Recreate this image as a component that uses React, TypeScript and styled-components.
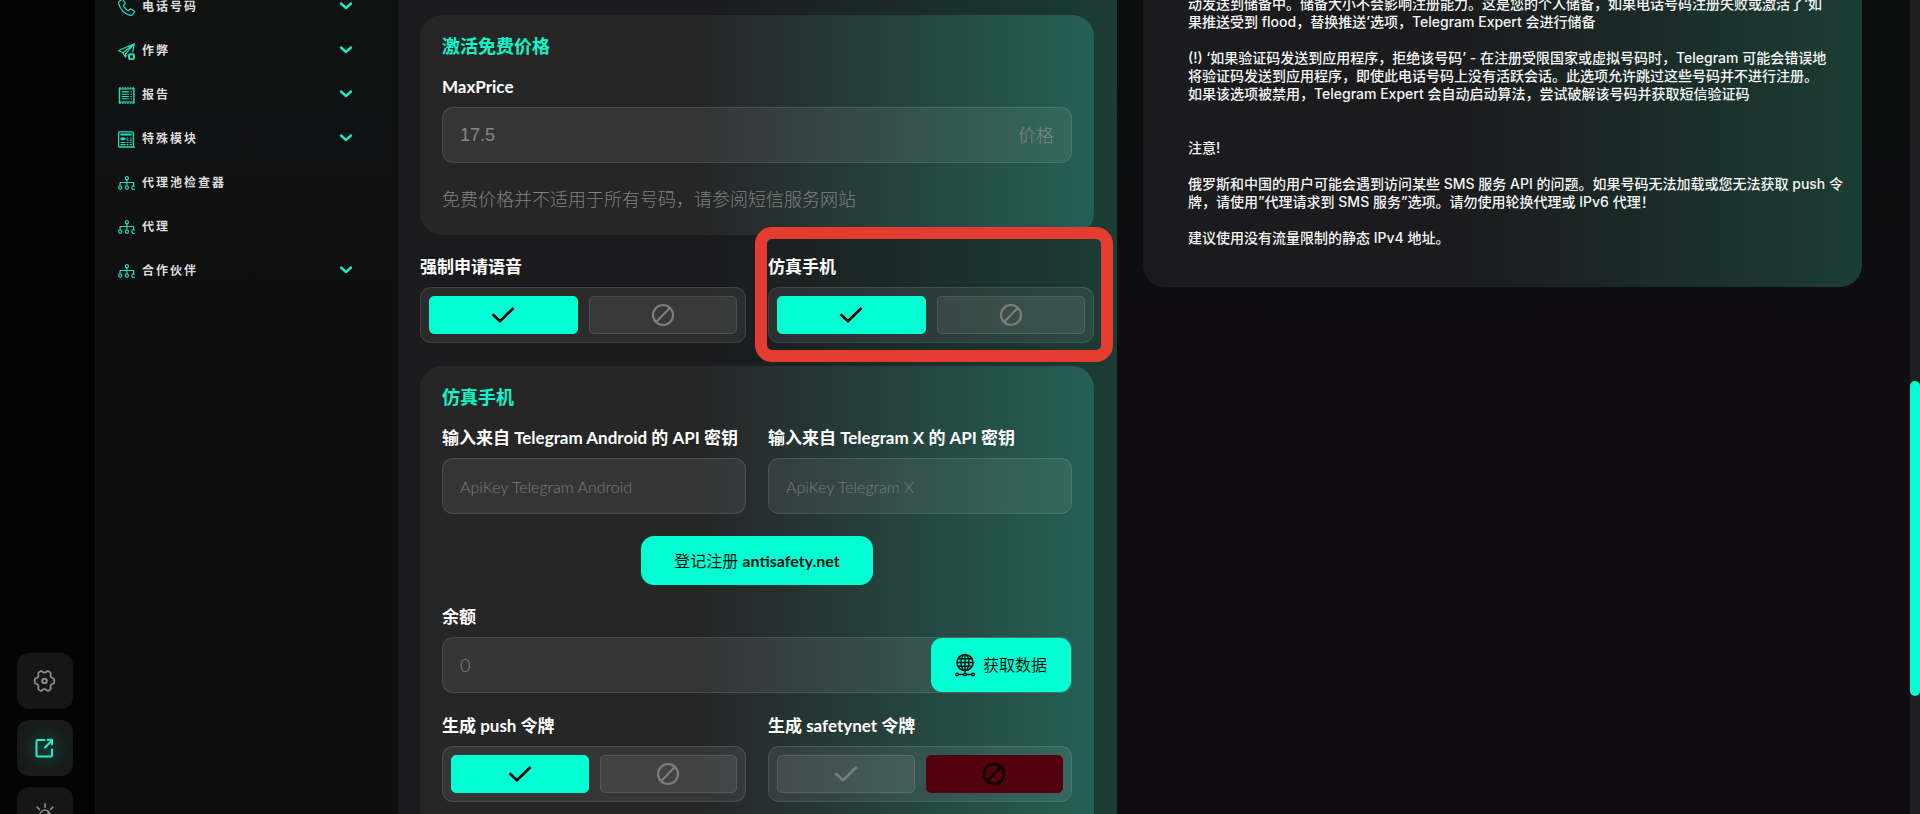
import React from 'react';
import styled, { createGlobalStyle, css } from 'styled-components';

const accent = '#00ffd2';
const sans = `"Lato", "Noto Sans CJK SC", sans-serif`;

const GlobalStyle = createGlobalStyle`
  *, *::before, *::after { box-sizing: border-box; }
  body {
    margin: 0;
    background: #0f0d10;
    color: #fff;
    font-family: ${sans};
    -webkit-font-smoothing: antialiased;
  }
  button, input { font: inherit; color: inherit; }
`;

/* ---------- shell ---------- */

const Shell = styled.div`
  display: flex;
  height: 100vh;
  overflow: hidden;
  background: linear-gradient(180deg, #0b0e0c 0, #0d0e0f 160px, #0f0d10 320px);
`;

const Rail = styled.nav`
  display: flex;
  flex: none;
  flex-direction: column;
  align-items: center;
  justify-content: flex-end;
  gap: 11px;
  width: 95px;
  padding-right: 5px;
  background: #040404;
`;

const RailButton = styled.button<{ $active?: boolean }>`
  display: grid;
  flex: none;
  place-items: center;
  width: 56px;
  height: 56px;
  padding: 0;
  border: 0;
  border-radius: 12px;
  color: ${(p) => (p.$active ? '#1ff0cb' : '#8b8b8b')};
  background: ${(p) =>
    p.$active ? 'radial-gradient(circle, #12382f 0, #171d1b 55%, #181818 100%)' : '#161616'};

  &:last-child { margin-bottom: -29px; }
`;

const Sidebar = styled.aside`
  flex: none;
  width: 303px;
  padding: 0 46px 0 23px;
  border-right: 1px solid #0a0a0a;
  background: linear-gradient(180deg, #101211 0, #101112 120px, #0e0e0f 320px);
`;

const Menu = styled.ul`
  margin: -15px 0 0;
  padding: 0;
  list-style: none;
`;

const MenuLink = styled.a`
  display: flex;
  align-items: center;
  gap: 7px;
  height: 44px;
  color: #dcdcdc;
  font-size: 12px;
  font-weight: 700;
  letter-spacing: 2px;
  line-height: 16px;
  text-decoration: none;

  svg { flex: none; color: #1fe0bd; }
  svg:nth-of-type(2) { margin: -3px -2px 0 auto; color: #1fe8c5; }
`;

const Main = styled.main`
  display: grid;
  flex: 1;
  grid-template-columns: minmax(0, 1fr) minmax(0, 1fr);
  gap: 26px;
  min-width: 0;
  padding-right: 48px;
  overflow: hidden;
`;

const ScrollTrack = styled.div`
  display: flex;
  flex: none;
  flex-direction: column;
  width: 10px;
  background: #201f21;

  &::before { flex: 381; content: ''; }
  &::after { flex: 118; content: ''; }
`;

const ScrollThumb = styled.div`
  flex: 315;
  border-radius: 5px;
  background: ${accent};
`;

/* ---------- form ---------- */

const panelFill = 'linear-gradient(90deg, #1b1b1d 0, #1b1b1d 44%, #1b3d34 100%)';

const FormPanel = styled.form`
  display: flex;
  flex-direction: column;
  min-width: 0;
  height: max-content;
  padding: 15px 23px 40px 22px;
  background: ${panelFill};
`;

const Card = styled.section<{ $tall?: boolean }>`
  padding: 22px 22px ${(p) => (p.$tall ? 60 : 23)}px;
  border-radius: 22px;
  background: linear-gradient(90deg, #262627 0, #262627 42%, #246055 100%);
`;

const CardTitle = styled.h2`
  margin: 0 0 20px;
  color: #0ff5cb;
  font-size: 18px;
  font-weight: 700;
  line-height: 18px;
`;

const Columns = styled.div`
  display: grid;
  grid-template-columns: minmax(0, 1fr) minmax(0, 1fr);
  gap: 22px;
`;

const OuterColumns = styled(Columns)`
  margin: 20px 0 23px;
`;

const Field = styled.div`
  position: relative;
  min-width: 0;
`;

const labelText = css`
  display: block;
  margin: 0;
  padding: 0 0 8px;
  font-size: 17px;
  font-weight: 700;
  line-height: 24px;
  white-space: nowrap;
`;

const Label = styled.label`
  ${labelText}
`;

const Group = styled.fieldset`
  min-width: 0;
  margin: 0;
  padding: 0;
  border: 0;
`;

const Legend = styled.legend`
  ${labelText}
`;

const InputShell = styled.div`
  display: flex;
  align-items: center;
  height: 56px;
  border: 1px solid rgba(255, 255, 255, 0.1);
  border-radius: 11px;
  background: rgba(255, 255, 255, 0.07);
`;

const Input = styled.input<{ $size: number; $plain?: boolean }>`
  flex: 1;
  min-width: 0;
  height: 100%;
  padding: 0 17px;
  border: 0;
  outline: 0;
  background: transparent;
  color: #858687;
  font-family: ${(p) => (p.$plain ? '"Liberation Sans", sans-serif' : sans)};
  font-size: ${(p) => p.$size}px;
  font-weight: 300;

  &::placeholder { color: #7b7d7d; opacity: 1; }
`;

const Suffix = styled.span`
  padding-right: 17px;
  color: #7f8a87;
  font-size: 18px;
  font-weight: 300;
  line-height: 24px;
`;

const Hint = styled.p`
  margin: 23px 0 0;
  color: #808181;
  font-size: 18px;
  font-weight: 300;
  line-height: 26px;
`;

const Highlight = styled.span`
  position: absolute;
  inset: -28px -19px -19px -13px;
  border: 12px solid #e53c32;
  border-radius: 17px;
  pointer-events: none;
`;

const Switch = styled.div`
  display: grid;
  grid-template-columns: minmax(0, 1fr) minmax(0, 1fr);
  gap: 11px;
  height: 56px;
  padding: 8px;
  border: 1px solid rgba(255, 255, 255, 0.1);
  border-radius: 11px;
  background: rgba(255, 255, 255, 0.07);
`;

const optionFill = {
  on: css`
    border-color: ${accent};
    background: ${accent};
    color: #000;
  `,
  off: css`
    border-color: #520410;
    background: #52000d;
    color: #000;
  `,
  idle: css`
    border-color: rgba(255, 255, 255, 0.1);
    background: rgba(255, 255, 255, 0.07);
    color: #7c7d7d;
  `,
};

const Option = styled.label<{ $look: keyof typeof optionFill }>`
  position: relative;
  display: grid;
  place-items: center;
  border: 1px solid;
  border-radius: 5px;
  ${(p) => optionFill[p.$look]}

  input {
    position: absolute;
    inset: 0;
    margin: 0;
    appearance: none;
  }
`;

const RegisterButton = styled.button`
  display: block;
  height: 49px;
  margin: 22px auto 20px;
  padding: 0 33px;
  border: 0;
  border-radius: 13px;
  background: ${accent};
  color: #04120f;
  font-size: 16px;
  font-weight: 400;
  line-height: 24px;

  b { font-weight: 700; }
`;

const FetchButton = styled.button`
  display: flex;
  align-items: center;
  justify-content: center;
  gap: 8px;
  width: 140px;
  height: 100%;
  padding: 0;
  border: 0;
  border-radius: 11px;
  background: ${accent};
  color: #04120f;
  font-size: 16px;
  font-weight: 400;
  line-height: 24px;
`;

const BottomColumns = styled(Columns)`
  margin-top: 21px;
`;

/* ---------- notes ---------- */

const Notes = styled.article`
  height: max-content;
  min-width: 0;
  margin-top: -5px;
  padding: 0 16px 40px 45px;
  border-radius: 0 0 22px 22px;
  background: ${panelFill};
  color: #f4f6f5;
  font-family: "Inter", "Noto Sans CJK SC", sans-serif;
  font-size: 14px;
  font-weight: 500;
  line-height: 18px;

  p { margin: 0 0 18px; }
  p.gap { margin-bottom: 36px; }
  p:last-child { margin-bottom: 0; }
`;

/* ---------- icons ---------- */

const stroke = { fill: 'none', stroke: 'currentColor', strokeLinecap: 'round', strokeLinejoin: 'round' } as const;

const Icon = ({ size = 17, children }: { size?: number; children: React.ReactNode }) => (
  <svg width={size} height={size} viewBox={`0 0 ${size} ${size}`} aria-hidden="true" {...stroke}>
    {children}
  </svg>
);

const PhoneIcon = () => (
  <Icon>
    <path strokeWidth="1.2" d="M3.6.8 1.5 2.2C.6 2.9.5 4 .9 5.3c1.5 4.800 5.800 9.300 10.600 10.900 1.400.4 2.500.3 3.200-.6l1.500-2c.4-.6.3-1.200-.2-1.600l-2.700-1.900c-.6-.4-1.200-.3-1.600.2l-.8 1.100c-.3.4-.7.4-1.100.1-1.700-1.200-3.200-2.700-4.300-4.400-.2-.4-.2-.8.2-1.100l1-.8c.5-.4.6-1 .2-1.600L5.200 1C4.800.5 4.200.4 3.600.8Z" />
  </Icon>
);

const PlaneIcon = () => (
  <Icon>
    <path strokeWidth="1.200" d="M16.300.7.6 7.500l4.200 2.200L16.300.7ZM4.800 9.700l2.600 4.400M16.300.7 7.400 11.200M16.300.7l-1.500 8.300" />
    <path d="m7.200 11 .3 3 1.700-2" />
    <rect x="11" y="11.200" width="5" height="5" rx="1.600" strokeWidth="2" />
  </Icon>
);

const ReportIcon = () => (
  <Icon>
    <path d="M1.500 1.200v14.600M15.900 1.200v14.600" strokeWidth="1.400" />
    <path d="M1.800 1.100h14M1.800 15.900h14" strokeDasharray=".6 2" strokeWidth="1.500" />
    <path d="M1.500 2h14.400M1.500 15h14.400M4 4.900h6.500M4 7.200h6.500M4 9.500h6.500M4 11.800h6.500M12.800 4.900h.6M12.800 7.200h.6M12.800 9.500h.6M12.800 11.800h.6" strokeWidth="1.100" />
  </Icon>
);

const ModuleIcon = () => (
  <Icon>
    <path d="M1.500.8h12.900q1 0 1 1v12.700q0 1.200 1 1.500H1.500q-.9 0-.9-1V1.800q0-1 .9-1Z" strokeWidth="1.300" />
    <path d="M3.200 3.600h9.800" strokeWidth="2" />
    <path d="M3.700 7.800h2.600" strokeWidth="2.800" />
    <path d="M9 7h1M12.300 7h1M9 9.200h1M12.300 9.200h1M3 11.500h4M9 11.500h1M12.300 11.500h1M3 13.600h4M9 13.600h1M12.300 13.600h1" strokeWidth="1.200" />
  </Icon>
);

const NetworkIcon = () => (
  <Icon>
    <g strokeWidth="1.200">
      <ellipse cx="8.900" cy="3.200" rx="1.500" ry="1.700" />
      <path d="M8.900 5v4.800M2.100 9.700V7.500h13.500v2.200" />
      <ellipse cx="2.200" cy="12.600" rx="1.500" ry="1.800" />
      <ellipse cx="8.900" cy="12.600" rx="1.500" ry="1.800" />
      <path d="M16.400 11q-2.500-1-2.500 1.600t2.500 1.600" />
    </g>
  </Icon>
);

const Chevron = () => (
  <svg width="14" height="10" viewBox="0 0 14 10" aria-hidden="true" {...stroke}>
    <path d="m2 2.500 5 4.500 5-4.500" strokeWidth="2.400" />
  </svg>
);

const GearIcon = () => (
  <svg width="24" height="24" viewBox="1 0 24 24" aria-hidden="true" {...stroke}>
    <path
      strokeWidth="1.800"
      d="M8.300 2.400q1.200-.9 2 .3.900 1 2.200 1t2.200-1q.8-1.200 2-.3l1.400.9q1.200.8.6 2-.5 1.300.1 2.400.7 1.200 2 1.400 1.400.2 1.400 1.600v2.600q0 1.400-1.400 1.600-1.300.2-2 1.400-.6 1.100-.1 2.400.6 1.200-.6 2l-1.400.9q-1.200.7-2-.4-.9-1-2.200-1t-2.200 1q-.8 1.100-2 .4l-1.400-.9q-1.200-.8-.6-2 .5-1.300-.1-2.400-.7-1.200-2-1.400-1.400-.2-1.400-1.600v-2.600q0-1.400 1.400-1.600 1.300-.2 2-1.400.6-1.100.1-2.400-.6-1.200.6-2Z"
    />
    <circle cx="12.500" cy="12" r="2.300" strokeWidth="2" />
  </svg>
);

const ExternalIcon = () => (
  <Icon size={20}>
    <path d="M9.500 2h-7q-1 0-1 1v14.500q0 1 1 1H16q1 0 1-1v-6" strokeWidth="2" />
    <path d="m10 9.500 7-7M12.500 1.700H17v4.800" strokeWidth="2" />
  </Icon>
);

const SunIcon = () => (
  <Icon size={24}>
    <circle cx="12" cy="12" r="5" strokeWidth="1.600" />
    <path d="M13.500 7.500a4 4 0 0 1-5 6 4.500 4.500 0 1 0 5-6Z" fill="currentColor" stroke="none" />
    <path d="M12 .8v3.400M12 19.800v3.400M.8 12h3.400M19.800 12h3.400M4 4l2.400 2.400M17.600 17.600 20 20M20 4l-2.400 2.400M6.400 17.600 4 20" strokeWidth="1.600" />
  </Icon>
);

const CheckIcon = () => (
  <Icon size={24}>
    <path d="m1.500 11.200 7.500 7L22.500 5" strokeWidth="2.600" strokeLinecap="butt" strokeLinejoin="miter" />
  </Icon>
);

const BanIcon = () => (
  <Icon size={24}>
    <circle cx="12" cy="12" r="10" strokeWidth="2.200" />
    <path d="M5.200 19 18.800 5" strokeWidth="2.200" />
  </Icon>
);

const GlobeIcon = () => (
  <svg width="20" height="24" viewBox="0 0 20 24" aria-hidden="true" {...stroke} strokeWidth="1.400">
    <circle cx="10" cy="9.500" r="8" strokeWidth="1.700" />
    <ellipse cx="10" cy="9.500" rx="4" ry="8" />
    <path d="M10 1.500v18M2.200 9.500h15.600M3.200 5.800h13.600M3.200 13.200h13.600M3.500 21.500h5M11.500 21.500h5" />
    <circle cx="2" cy="21.500" r="1.300" />
    <circle cx="10" cy="21.500" r="1.300" />
    <circle cx="18" cy="21.500" r="1.300" />
  </svg>
);

/* ---------- page ---------- */

const menu = [
  { text: '电话号码', icon: PhoneIcon, open: true },
  { text: '作弊', icon: PlaneIcon, open: true },
  { text: '报告', icon: ReportIcon, open: true },
  { text: '特殊模块', icon: ModuleIcon, open: true },
  { text: '代理池检查器', icon: NetworkIcon, open: false },
  { text: '代理', icon: NetworkIcon, open: false },
  { text: '合作伙伴', icon: NetworkIcon, open: true },
];

type ToggleProps = { name: string; label: string; value: boolean; highlighted?: boolean };

const Toggle = ({ name, label, value, highlighted }: ToggleProps) => {
  const [on, setOn] = React.useState(value);
  return (
    <Field>
      <Group>
        <Legend>{label}</Legend>
        <Switch>
          <Option $look={on ? 'on' : 'idle'}>
            <input type="radio" name={name} aria-label="是" checked={on} onChange={() => setOn(true)} />
            <CheckIcon />
          </Option>
          <Option $look={on ? 'idle' : 'off'}>
            <input type="radio" name={name} aria-label="否" checked={!on} onChange={() => setOn(false)} />
            <BanIcon />
          </Option>
        </Switch>
      </Group>
      {highlighted && <Highlight />}
    </Field>
  );
};

export default function App() {
  return (
    <>
      <GlobalStyle />
      <Shell>
        <Rail>
          <RailButton type="button" aria-label="设置"><GearIcon /></RailButton>
          <RailButton type="button" aria-label="打开" $active><ExternalIcon /></RailButton>
          <RailButton type="button" aria-label="主题"><SunIcon /></RailButton>
        </Rail>

        <Sidebar>
          <Menu>
            {menu.map(({ text, icon: ItemIcon, open }) => (
              <li key={text}>
                <MenuLink href="#">
                  <ItemIcon />
                  {text}
                  {open && <Chevron />}
                </MenuLink>
              </li>
            ))}
          </Menu>
        </Sidebar>

        <Main>
          <FormPanel>
            <Card>
              <CardTitle>激活免费价格</CardTitle>
              <Field>
                <Label htmlFor="max-price">MaxPrice</Label>
                <InputShell>
                  <Input id="max-price" $size={18} $plain defaultValue="17.5" />
                  <Suffix>价格</Suffix>
                </InputShell>
              </Field>
              <Hint>免费价格并不适用于所有号码，请参阅短信服务网站</Hint>
            </Card>

            <OuterColumns>
              <Toggle name="voice" label="强制申请语音" value />
              <Toggle name="emulation" label="仿真手机" value highlighted />
            </OuterColumns>

            <Card $tall>
              <CardTitle>仿真手机</CardTitle>
              <Columns>
                <Field>
                  <Label htmlFor="key-android">输入来自 Telegram Android 的 API 密钥</Label>
                  <InputShell>
                    <Input id="key-android" $size={16} placeholder="ApiKey Telegram Android" />
                  </InputShell>
                </Field>
                <Field>
                  <Label htmlFor="key-x">输入来自 Telegram X 的 API 密钥</Label>
                  <InputShell>
                    <Input id="key-x" $size={16} placeholder="ApiKey Telegram X" />
                  </InputShell>
                </Field>
              </Columns>
              <RegisterButton type="button">登记注册 <b>antisafety.net</b></RegisterButton>
              <Field>
                <Label htmlFor="balance">余额</Label>
                <InputShell>
                  <Input id="balance" $size={18} defaultValue="0" />
                  <FetchButton type="button"><GlobeIcon />获取数据</FetchButton>
                </InputShell>
              </Field>
              <BottomColumns>
                <Toggle name="push" label="生成 push 令牌" value />
                <Toggle name="safetynet" label="生成 safetynet 令牌" value={false} />
              </BottomColumns>
            </Card>
          </FormPanel>

          <Notes>
            <p>
              动发送到储备中。储备大小不会影响注册能力。这是您的个人储备，如果电话号码注册失败或激活了‘如<br />
              果推送受到 flood，替换推送’选项，Telegram Expert 会进行储备
            </p>
            <p className="gap">
              (!) ‘如果验证码发送到应用程序，拒绝该号码’ - 在注册受限国家或虚拟号码时，Telegram 可能会错误地<br />
              将验证码发送到应用程序，即使此电话号码上没有活跃会话。此选项允许跳过这些号码并不进行注册。<br />
              如果该选项被禁用，Telegram Expert 会自动启动算法，尝试破解该号码并获取短信验证码
            </p>
            <p>注意!</p>
            <p>
              俄罗斯和中国的用户可能会遇到访问某些 SMS 服务 API 的问题。如果号码无法加载或您无法获取 push 令<br />
              牌，请使用”代理请求到 SMS 服务”选项。请勿使用轮换代理或 IPv6 代理！
            </p>
            <p>建议使用没有流量限制的静态 IPv4 地址。</p>
          </Notes>
        </Main>

        <ScrollTrack><ScrollThumb /></ScrollTrack>
      </Shell>
    </>
  );
}
